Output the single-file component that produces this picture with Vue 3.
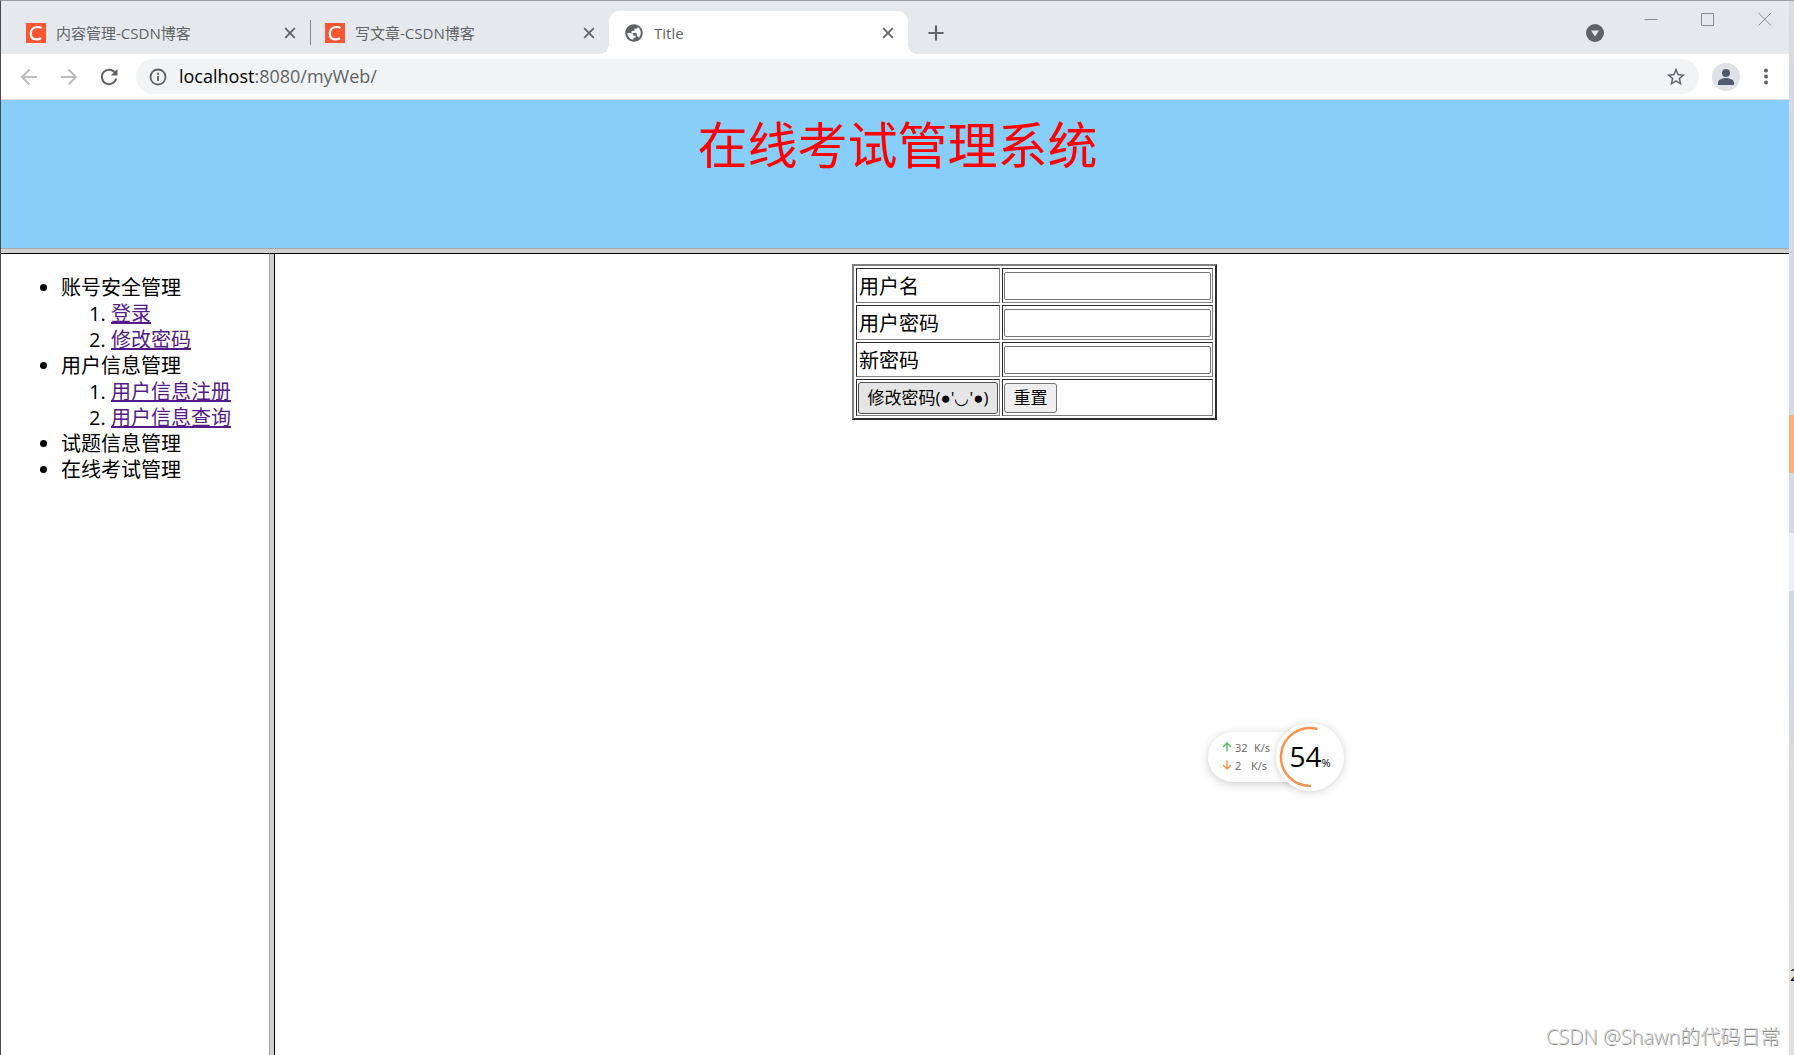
<script setup>
import { ref } from 'vue'

const tabs = [
  { title: '内容管理-CSDN博客', icon: 'csdn', active: false, divider: false },
  { title: '写文章-CSDN博客', icon: 'csdn', active: false, divider: true },
  { title: 'Title', icon: 'globe', active: true, divider: false }
]

const menu = [
  { title: '账号安全管理', items: ['登录', '修改密码'] },
  { title: '用户信息管理', items: ['用户信息注册', '用户信息查询'] },
  { title: '试题信息管理', items: [] },
  { title: '在线考试管理', items: [] }
]

const userName = ref('')
const oldPassword = ref('')
const newPassword = ref('')
</script>

<template>
  <div class="window">
    <div class="tab-strip">
      <div v-for="tab in tabs" :key="tab.title" class="tab" :class="{ active: tab.active, divider: tab.divider }">
        <svg v-if="tab.icon === 'csdn'" class="favicon" width="20" height="20" viewBox="0 0 20 20">
          <rect width="20" height="20" fill="#fc5531" />
          <path d="M15.500 5.200C14.300 4.300 12.700 3.900 11 4C7.200 4.200 4.800 6.800 4.800 10.500C4.800 14.200 7 16.300 10.400 16.300C12.200 16.300 13.800 15.900 15 15.200" fill="none" stroke="#fff" stroke-width="2.200" />
        </svg>
        <svg v-else class="favicon" width="20" height="20" viewBox="0 0 24 24">
          <path fill="#5f6368" d="M12 1.500C6.200 1.500 1.500 6.200 1.500 12S6.200 22.500 12 22.500 22.500 17.800 22.500 12 17.800 1.500 12 1.500zM4 12l5 .2c1.600 0 2.400.8 2.400 2v1h2.500v2.600h-2.700v2.100C7.200 19.700 4 16.200 4 12zm13.800 5.600c-.3-1-.9-1.700-2-1.700h-.4v-2.400c0-.9-.5-1.500-1.500-1.500H9V9.600h2.200c.8 0 1.300-.5 1.300-1.300V6.800h2c1.300 0 2-.9 2.100-2.100 2.100 1.400 3.500 4.200 3.500 7.300 0 2.100-.8 4.100-2.300 5.600z" />
        </svg>
        <span class="tab-title">{{ tab.title }}</span>
        <button class="icon-button" type="button" aria-label="关闭标签页">
          <svg width="12" height="12" viewBox="0 0 12 12"><path d="M1.200 1.200l9.600 9.600M10.800 1.200l-9.600 9.600" stroke="#5f6368" stroke-width="1.800" /></svg>
        </button>
      </div>
      <button class="icon-button new-tab" type="button" aria-label="新标签页">
        <svg width="16" height="16" viewBox="0 0 16 16"><path d="M8 .5v15M.5 8h15" stroke="#5f6368" stroke-width="2.200" /></svg>
      </button>
      <button class="icon-button tab-search" type="button" aria-label="搜索标签页">
        <svg width="18" height="18" viewBox="0 0 18 18"><circle cx="9" cy="9" r="9" fill="#5f6368" /><path d="M5 6.500h8L9 12.500z" fill="#e6e9ec" /></svg>
      </button>
      <div class="window-controls">
        <button class="icon-button" type="button" aria-label="最小化">
          <svg width="14" height="14" viewBox="0 0 14 14"><path d="M.5 7.500h13" stroke="#8b8e90" /></svg>
        </button>
        <button class="icon-button" type="button" aria-label="最大化">
          <svg width="14" height="14" viewBox="0 0 14 14"><path d="M.5 1.500h12v12H.5z" fill="none" stroke="#8b8e90" /></svg>
        </button>
        <button class="icon-button" type="button" aria-label="关闭">
          <svg width="14" height="14" viewBox="0 0 14 14"><path d="M.5 1l12.500 12.500M13 1L.5 13.500" stroke="#8b8e90" /></svg>
        </button>
      </div>
    </div>

    <div class="toolbar">
      <button class="icon-button" type="button" aria-label="后退">
        <svg width="18" height="18" viewBox="0 0 18 18"><path d="M17 9H2M9.500 1.500L2 9l7.500 7.500" fill="none" stroke="#babcbe" stroke-width="2" /></svg>
      </button>
      <button class="icon-button" type="button" aria-label="前进">
        <svg width="18" height="18" viewBox="0 0 18 18"><path d="M1 9h15M8.500 1.500L16 9l-7.500 7.500" fill="none" stroke="#babcbe" stroke-width="2" /></svg>
      </button>
      <button class="icon-button" type="button" aria-label="重新加载">
        <svg width="18" height="18" viewBox="0 0 18 18"><path d="M15 4.800A7.200 7.200 0 1 0 16.100 10.500" fill="none" stroke="#5f6368" stroke-width="2" /><path d="M17.500 .8V7.500H10.800z" fill="#5f6368" /></svg>
      </button>
      <div class="address">
        <svg width="18" height="18" viewBox="0 0 18 18"><circle cx="9" cy="9" r="7.500" fill="none" stroke="#5f6368" stroke-width="1.800" /><path d="M9 8v5M9 4.800v2" stroke="#5f6368" stroke-width="1.800" /></svg>
        <span class="url">localhost<span class="url-rest">:8080/myWeb/</span></span>
        <button class="icon-button" type="button" aria-label="为此页添加书签">
          <svg width="22" height="22" viewBox="0 0 24 24"><path fill="#5f6368" d="M22 9.240l-7.190-.62L12 2 9.190 8.630 2 9.240l5.460 4.730L5.820 21 12 17.270 18.180 21l-1.630-7.030L22 9.240zM12 15.400l-3.760 2.270 1-4.280-3.320-2.880 4.380-.38L12 6.100l1.710 4.040 4.380.38-3.320 2.880 1 4.280L12 15.400z" /></svg>
        </button>
      </div>
      <button class="icon-button avatar" type="button" aria-label="用户">
        <svg width="28" height="28" viewBox="0 0 28 28"><circle cx="14" cy="14" r="14" fill="#dee1e6" /><circle cx="14" cy="10" r="4" fill="#4f5b70" /><path d="M6 22v-2.500c0-3 5-4.500 8-4.500s8 1.500 8 4.500V22z" fill="#4f5b70" /></svg>
      </button>
      <button class="icon-button" type="button" aria-label="菜单">
        <svg width="18" height="18" viewBox="0 0 18 18" fill="#5f6368"><circle cx="9" cy="2.500" r="2" /><circle cx="9" cy="8.500" r="2" /><circle cx="9" cy="14.500" r="2" /></svg>
      </button>
    </div>

    <header class="banner">在线考试管理系统</header>

    <div class="frames">
      <nav class="sidebar">
        <ul>
          <li v-for="group in menu" :key="group.title">
            {{ group.title }}
            <ol v-if="group.items.length">
              <li v-for="item in group.items" :key="item"><a href="#">{{ item }}</a></li>
            </ol>
          </li>
        </ul>
      </nav>
      <div class="column-splitter"></div>
      <main class="content">
        <form @submit.prevent>
          <table>
            <tbody>
              <tr>
                <td><label for="user-name">用户名</label></td>
                <td><input id="user-name" v-model="userName" type="text"></td>
              </tr>
              <tr>
                <td><label for="old-password">用户密码</label></td>
                <td><input id="old-password" v-model="oldPassword" type="password"></td>
              </tr>
              <tr>
                <td><label for="new-password">新密码</label></td>
                <td><input id="new-password" v-model="newPassword" type="password"></td>
              </tr>
              <tr class="actions">
                <td><button class="submit" type="submit">修改密码(●'◡'●)</button></td>
                <td><button class="reset" type="reset">重置</button></td>
              </tr>
            </tbody>
          </table>
        </form>
      </main>
    </div>

    <aside class="monitor">
      <div class="speeds">
        <div class="speed">
          <svg width="10" height="10" viewBox="0 0 10 10"><path d="M5 9.500V1M1 5l4-4 4 4" fill="none" stroke="#4bbf62" stroke-width="1.400" /></svg>
          <span class="amount">32</span><span>K/s</span>
        </div>
        <div class="speed">
          <svg width="10" height="10" viewBox="0 0 10 10"><path d="M5 .5V9M1 5l4 4 4-4" fill="none" stroke="#fb9046" stroke-width="1.400" /></svg>
          <span class="amount short">2</span><span>K/s</span>
        </div>
      </div>
      <div class="gauge">
        <svg class="arc" width="68" height="68" viewBox="0 0 68 68"><path d="M41.500 6A29 29 0 1 0 35 63" fill="none" stroke="#fb9250" stroke-width="2.500" /></svg>
        <span class="percent">54</span><span class="unit">%</span>
      </div>
    </aside>

    <div class="watermark">CSDN @Shawn的代码日常</div>
    <div class="desktop-edge"><span>2</span></div>
  </div>
</template>

<style>
body {
  margin: 0;
}
</style>

<style scoped>
.window {
  position: relative;
  box-sizing: border-box;
  display: flex;
  flex-direction: column;
  min-height: 100vh;
  overflow: hidden;
  border-top: 1px solid #9b9ea3;
  border-left: 1px solid #4a4a4d;
  background: #fff;
  color: #000;
  font-family: "Open Sans", "Noto Sans CJK SC", sans-serif;
  font-size: 20px;
}

svg {
  display: block;
  flex: none;
}

.icon-button {
  display: flex;
  flex: none;
  padding: 0;
  border: 0;
  background: none;
}

.tab-strip {
  display: flex;
  align-items: flex-end;
  height: 53px;
  padding: 0 22px 0 10px;
  background: #e6e9ec;
}

.tab {
  position: relative;
  box-sizing: border-box;
  display: flex;
  align-items: center;
  width: 299px;
  height: 43px;
  padding: 0 14px 0 15px;
  color: #5f6368;
  font-size: 15px;
}

.tab.divider::before {
  content: "";
  position: absolute;
  left: 0;
  top: 9px;
  width: 1px;
  height: 25px;
  background: #85888c;
}

.tab.active {
  border-radius: 10px 10px 0 0;
  background: #fff;
}

.tab.active::before,
.tab.active::after {
  content: "";
  position: absolute;
  bottom: 0;
  width: 10px;
  height: 10px;
}

.tab.active::before {
  right: 100%;
  background: radial-gradient(circle at 0 0, #e6e9ec 10px, #fff 10px);
}

.tab.active::after {
  left: 100%;
  background: radial-gradient(circle at 100% 0, #e6e9ec 10px, #fff 10px);
}

.tab-title {
  flex: 1;
  margin-left: 10px;
  white-space: nowrap;
}

.new-tab {
  margin: 0 auto 13px 20px;
}

.tab-search {
  margin: 0 40px 12px 0;
}

.window-controls {
  display: flex;
  gap: 43px;
  align-self: flex-start;
  margin-top: 11px;
}

.toolbar {
  display: flex;
  align-items: center;
  gap: 22px;
  height: 45px;
  padding: 0 19px;
  border-bottom: 1px solid #dadce0;
}

.address {
  box-sizing: border-box;
  display: flex;
  flex: 1;
  align-items: center;
  height: 35px;
  margin-right: -9px;
  margin-left: -4px;
  padding: 0 12px 0 13px;
  border-radius: 18px;
  background: #f1f3f4;
}

.url {
  flex: 1;
  margin-left: 12px;
  padding-bottom: 2px;
  font-size: 18px;
  line-height: 24px;
}

.url-rest {
  color: #5f6368;
}

.avatar {
  margin-right: -5px;
}

.banner {
  box-sizing: border-box;
  height: 149px;
  padding-top: 12px;
  border-bottom: 1px solid #a8a8a8;
  background: #87cefa;
  color: #f00;
  font-size: 50px;
  line-height: 66px;
  text-align: center;
}

.frames {
  display: flex;
  flex: 1;
  border-top: 4px solid #cfcfcf;
}

.sidebar {
  box-sizing: border-box;
  flex: none;
  width: 268px;
  padding: 21px 10px;
  border-top: 1px solid #000;
  line-height: 26px;
}

.column-splitter {
  box-sizing: border-box;
  flex: none;
  width: 6px;
  border-top: 1px solid #000;
  border-right: 1px solid #000;
  border-left: 1px solid #a8a8a8;
  background: #cfcfcf;
}

ul,
ol {
  margin: 0;
  padding-left: 50px;
}

.sidebar a {
  color: #551a8b;
}

.content {
  flex: 1;
  padding-top: 10px;
  border-top: 1px solid #000;
}

table {
  width: 365px;
  margin: 0 auto;
  border: 2px solid;
  border-color: #808080 #2c2c2c #2c2c2c #808080;
  border-spacing: 2px;
  table-layout: fixed;
}

td {
  box-sizing: border-box;
  height: 35px;
  padding: 1px;
  border: 1px solid;
  border-color: #2c2c2c #808080 #808080 #2c2c2c;
  line-height: 26px;
}

td:first-child {
  width: 144px;
}

label {
  display: block;
  padding: 2px 0 0 1px;
}

.actions td {
  height: 37px;
}

input {
  display: block;
  box-sizing: border-box;
  width: 100%;
  height: 28px;
  border: 1px solid #767676;
  border-radius: 2px;
  background: #fff;
  font-size: 17px;
}

td button {
  display: block;
  box-sizing: border-box;
  height: 30px;
  padding: 0;
  border: 1px solid #767676;
  border-radius: 3px;
  background: #efefef;
  color: #000;
  font-family: "Open Sans", "Liberation Sans", "Noto Sans CJK SC", sans-serif;
  font-size: 17px;
  line-height: 24px;
  white-space: nowrap;
}

.submit {
  width: 100%;
  height: 32px;
  border-color: #4f4f4f;
  background: #e5e5e5;
}

.reset {
  width: 53px;
}

.monitor {
  position: absolute;
  top: 722px;
  right: 450px;
  display: flex;
  align-items: center;
}

.speeds {
  box-sizing: border-box;
  width: 102px;
  height: 50px;
  margin-right: -34px;
  padding: 6px 0 0 14px;
  border-radius: 25px;
  background: #fff;
  box-shadow: 0 2px 10px rgba(0, 0, 0, 0.2);
}

.speed {
  display: flex;
  align-items: center;
  height: 18px;
  color: #666;
  font-size: 11px;
}

.amount {
  width: 19px;
  margin-left: 3px;
}

.amount.short {
  width: 16px;
}

.gauge {
  position: relative;
  display: flex;
  align-items: baseline;
  justify-content: center;
  width: 68px;
  height: 68px;
  border-radius: 50%;
  background: #fff;
  box-shadow: 0 1px 8px rgba(0, 0, 0, 0.18);
  line-height: 66px;
}

.arc {
  position: absolute;
  top: 0;
  left: 0;
}

.percent {
  font-size: 28px;
}

.unit {
  font-size: 11px;
}

.watermark {
  position: absolute;
  right: 14px;
  bottom: 4px;
  color: #d4d4d4;
  font-size: 20px;
  font-weight: 300;
  line-height: 28px;
  text-shadow: 1px 1px 0 #8c8c8c;
}

.desktop-edge {
  position: absolute;
  top: -1px;
  right: 0;
  bottom: 0;
  width: 5px;
  overflow: hidden;
  background: linear-gradient(#dcdcdc 0, #d4d9e6 120px, #d6dae6 415px, #f9b27c 415px, #f9b27c 473px, #d6dae6 473px, #d6dae6 533px, #eceff5 533px, #eceff5 591px, #d0d8e8 591px, #d4d9e4 700px, #dadcdb 760px, #e0e0e0 1000px);
}

.desktop-edge span {
  display: block;
  margin: 964px 0 0 1px;
  font-size: 16px;
  line-height: 22px;
}
</style>
